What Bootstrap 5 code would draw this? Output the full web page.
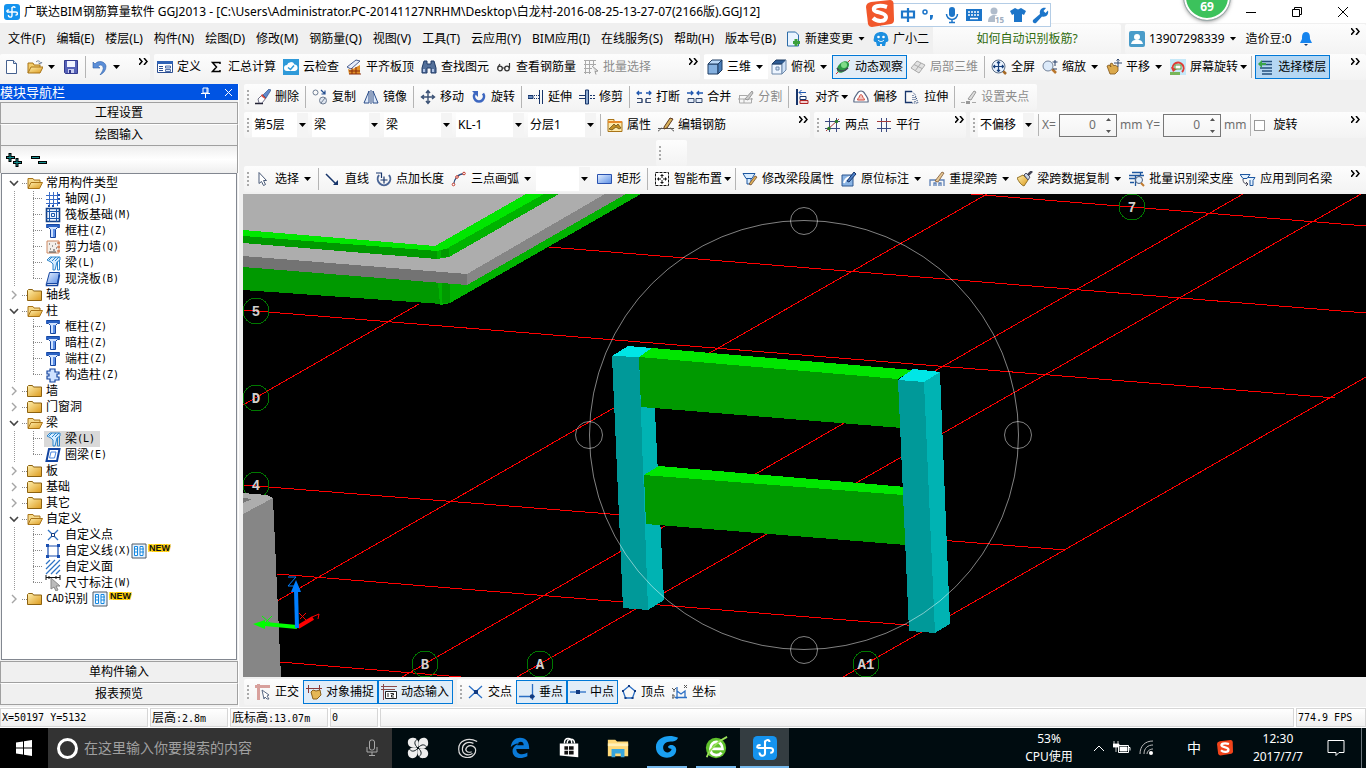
<!DOCTYPE html>
<html lang="zh-CN">
<head>
<meta charset="utf-8">
<meta name="viewport" content="width=device-width, initial-scale=1">
<title>广联达BIM钢筋算量软件 GGJ2013</title>
<link href="https://cdn.jsdelivr.net/npm/bootstrap@5.3.0/dist/css/bootstrap.min.css" rel="stylesheet">
<style>
:root{--ui:"Noto Sans","Noto Sans CJK SC",sans-serif;--mono:"DejaVu Sans Mono","Noto Sans CJK SC",monospace}
body{font-family:var(--ui);font-size:12px;line-height:16px;color:#000;background:#f0f0f0;min-height:100vh;overflow:hidden}
.app{height:100vh}
svg{flex:none}
.ic{width:16px;height:16px}
.titlebar{height:23px;background:#fff}
.titlebar .logo{width:16px;height:16px}
.win-btn{width:46px;height:23px;border:0;background:none;padding:0}
.ime{top:3px;left:880px;width:171px;height:24px;background:#fff;border:1px solid #b4cde6;padding-left:18px;z-index:3}
.ime svg{width:18px;height:18px}
.ime-logo{top:0;left:866px;width:28px;height:28px;z-index:4}
.bubble{top:-26px;left:1184px;width:46px;height:46px;border-radius:50%;background:#3cc25c;border:2px solid #fff;outline:1px solid #9aa;box-shadow:0 1px 4px #777;color:#fff;font-weight:700;font-size:12px;line-height:12px;z-index:3;padding-bottom:5px}
.menurow{height:31px}
.menurow .menu-link{padding:0 6px 0 5px;color:#000;text-decoration:none;white-space:nowrap}
.tip-link{color:#2f6b0c;text-decoration:none}
.band{height:26px;background:linear-gradient(#fdfdfd,#f3f3f3);display:flex;align-items:center;flex:none;border-radius:2px}
.menurow .band{height:30px}
.band.fill{flex:1 1 0;min-width:0}
.b-user{width:241px}.b-file{width:150px}.b-calc{width:546px}.b-pick{width:566px}.b-axis{width:152px}.b-stub{width:31px;margin-left:412px}
.tool{display:inline-flex;align-items:center;gap:4px;height:24px;padding:0 4px 0 3px;border:0;border-radius:0;background:none;font-size:12px;line-height:16px;color:#000;white-space:nowrap;flex:none}
.tool:disabled{color:#8c8c8c;opacity:1;border:0}
.tool.on{background:#e1edf8;outline:1px solid #0078d7;outline-offset:-1px}
.tool.on.deep{background:#b5d7f3}
.tool.dd::after,.tool.ddt::after{content:"";width:7px;height:4px;background:#000;clip-path:polygon(0 0,100% 0,50% 100%);margin:0 1px}
.tool.ddt::after{margin:0 -2px}
.tool.white{background:#fff}
.vsep{width:1px;height:22px;background:#b4b4b4;margin:0 3px 0 2px;flex:none}
.grip{width:2px;height:14px;margin:0 3px 0 3px;flex:none;background:repeating-linear-gradient(#aaa 0 2px,transparent 2px 4px)}
.more{margin-left:auto;align-self:flex-start;border:0;background:none;padding:4px 2px 0;line-height:0;flex:none}
.more svg{width:9px;height:7px}
.combo{display:flex;height:24px;background:#fff;flex:none}
.combo select{flex:1 1 0;min-width:0;border:0;appearance:none;background:none;font:12px/16px var(--ui);color:#000;padding:0 2px}
.combo::after{content:"";width:11px;background:url("data:image/svg+xml,%3Csvg xmlns='http://www.w3.org/2000/svg' width='11' height='24'%3E%3Cpath d='M2 10h7l-3.500 4z'/%3E%3C/svg%3E") #f4f4f4}
.w-floor{width:56px}.w-kind{width:68px}.w-blank{width:54px}
.spin{display:flex;align-items:center;width:58px;height:23px;border:1px solid #777;margin:0 3px;flex:none}
.spin input{flex:1 1 0;min-width:0;border:0;background:none;text-align:right;color:#6e6e6e;padding:0 8px 0 0;font-size:12px}
.spin svg{width:9px;height:17px;margin-right:3px}
.dim{color:#6e6e6e}
.chk{appearance:none;width:11px;height:11px;border:1px solid #999;background:#fff;margin:0 8px 0 0}
.side{width:239px;border-right:1px solid #fff;flex:none}
.side-head{height:16px;background:#0054e3;color:#fff;font-size:13px;line-height:16px;flex:none;margin-bottom:2px}
.side-head svg{width:11px;height:11px}
.acc{height:22px;border:1px solid #a0a0a0;background:#f0f0f0;font-size:12px;padding:0;border-radius:0;flex:none;width:238px;color:#000}
.acc + .acc{border-top-color:#fff}
.acc.last{margin-bottom:2px}
.side-tools{height:27px;background:linear-gradient(#eee,#fff 50%,#eee);border:1px solid #a0a0a0;border-width:0 1px;width:238px;flex:none}
.treebox{border:1px solid #828790;background:#fff;width:236px;margin-left:1px;margin-bottom:1px;padding-top:1px;min-height:0;overflow:hidden}
.treebox ul{list-style:none;margin:0;padding:0}
.trow{display:flex;align-items:center;height:16px;padding-left:7px;white-space:nowrap}
.trow .chev{width:10px;height:10px}
.trow .stub{width:5px;height:1px;margin-left:3px;background:repeating-linear-gradient(90deg,#888 0 1px,transparent 1px 2px)}
.trow .ic{margin-right:3px}
.kids{background:repeating-linear-gradient(#999 0 1px,transparent 1px 2px) 12px 0/1px 100% no-repeat}
.leaf{display:flex;height:16px;padding-left:31px;white-space:nowrap}
.leaf::before{content:"";width:10px;margin-right:1px;background:repeating-linear-gradient(#888 0 1px,transparent 1px 2px) 0 0/1px 100% no-repeat,repeating-linear-gradient(90deg,#888 0 1px,transparent 1px 2px) 0 7px/10px 1px no-repeat}
.leaf:last-child::before{background-size:1px 8px,10px 1px}
.leaf span.item{display:flex;padding:0 5px 0 1px}
.leaf .ic{margin-right:4px}
.leaf .sel{background:#d9d9d9}
.lat{font:10px/16px var(--mono)}
.newtag{font:bold 9px/9px "Liberation Sans",sans-serif;color:#111;text-shadow:0 0 1px #ffcf00,1px 1px 0 #ffcf00,-1px -1px 0 #ffcf00,1px -1px 0 #ffcf00,-1px 1px 0 #ffcf00;margin:1px 0 0 2px}
.canvas{background:#000;min-height:0;margin-left:4px}
.canvas svg{width:100%;height:100%;display:block}
.work{min-width:0}
.work > .rowbar{padding-left:5px}
.gap-row{margin-bottom:2px}
.snapbar{height:30px}
.status{height:21px;background:#fff;font:10px/18px var(--mono);flex:none;gap:2px;padding-top:1px}
.status > div{height:19px;border:1px solid #d6d6d6;background:linear-gradient(#fff,#f0f0f0);padding-left:1px;white-space:nowrap}
.status .zh{font-size:12px}
.s-xy{width:148px}.s-h{width:78px}.s-b{width:98px}.s-n{width:48px}.s-fps{width:70px}
.taskbar{height:40px;background:#000c10;color:#fff;flex:none}
.start{width:48px;height:40px;background:#000;border:0;padding:0}
.search{width:344px;height:40px;background:#333;padding:0 14px 0 8px;margin-right:1px}
.search input{border:0;background:none;color:#aaa;font-size:14px;flex:1;min-width:0;padding:0 0 0 5px}
.search input::placeholder{color:#a0a0a0;opacity:1}
.tk{width:49px;height:40px;border:0;background:none;padding:0}
.tk.run{background:linear-gradient(#76b9ed,#76b9ed) 50% 100%/40px 2px no-repeat}
.tk.cur{background:linear-gradient(#76b9ed,#76b9ed) 50% 100%/49px 2px no-repeat #343d41}
.tk svg{width:24px;height:24px}
.tray{line-height:18px}
.tray-ime{font-size:14px}
</style>
</head>
<body>
<svg width="0" height="0" class="position-absolute" aria-hidden="true">
<defs>
<linearGradient id="gold" x2="1" y2="1"><stop offset="0" stop-color="#fff0b0"/><stop offset="1" stop-color="#dc9a1c"/></linearGradient>
<linearGradient id="blu" x2="1" y2="1"><stop offset="0" stop-color="#e6f1ff"/><stop offset="1" stop-color="#5c8fe6"/></linearGradient>
<symbol id="i-app" viewBox="0 0 16 16"><rect width="16" height="16" rx="3" fill="#1593ee"/><path d="M8 3v8.500c0 2.500-4 2-3.500-.5M3 8h8.500c2.500 0 2.500 3.500 0 3M8 4c1-2 3-1.500 3 0M3 8c-.5-1.500 1-2.500 2-1.500" fill="none" stroke="#fff" stroke-width="1.400"/></symbol>
<symbol id="i-new" viewBox="0 0 16 16"><path d="M2.500 1.500h7l3 3v10h-10z" fill="#fff" stroke="#46618f"/><path d="M9.500 1.500v3h3" fill="#dbe6f6" stroke="#46618f"/></symbol>
<symbol id="i-open" viewBox="0 0 16 16"><path d="M1 14V4h5l1 2h6v2" fill="#f3cd6b" stroke="#a97418"/><path d="M1 14 4 8h12l-3 6z" fill="url(#gold)" stroke="#a97418"/><path d="M9 3c2-2 4-1 4.500 1M15 3l-1.500 2-2-1" fill="none" stroke="#6c7e97"/></symbol>
<symbol id="i-save" viewBox="0 0 16 16"><path d="M1.500 1.500h13v13h-12l-1-1z" fill="#5662b8" stroke="#333a8e"/><path d="M4 2h8v6H4z" fill="#f2f4ff"/><path d="M5 10h6v4H5z" fill="#c8cdf0"/><path d="M6 11h2v3H6z" fill="#333a8e"/></symbol>
<symbol id="i-undo" viewBox="0 0 16 16"><path d="M1 3l2 2c3-4 10-3 11 2 0 4-2 7-6 9 2-3 4-6 3-8-1-3-4-2-5-.5L8 9H1z" fill="#5b8ed8" stroke="#2b5ea8" stroke-width=".6"/></symbol>
<symbol id="i-more" viewBox="0 0 9 7"><path d="M0 0l3 3.500L0 7M5 0l3 3.500L5 7" fill="none" stroke="#000" stroke-width="1.500"/></symbol>
<symbol id="i-def" viewBox="0 0 16 16"><path d="M.5 2.500h15v11H.5z" fill="#fff" stroke="#2b4f93"/><path d="M0 2h16v3H0z" fill="#2f62b5"/><path d="M2 7.500h4M2 9.500h4M2 11.500h4" stroke="#2b4f93"/><path d="M8.500 7h5v2h-5zM8.500 10.500h5v2h-5z" fill="#dceaff" stroke="#2b4f93" stroke-width=".8"/></symbol>
<symbol id="i-sum" viewBox="0 0 16 16"><path d="M12 5V3.500H4.500L8.500 8l-4 4.500H12V11" fill="none" stroke="#000" stroke-width="1.500"/></symbol>
<symbol id="i-cloud" viewBox="0 0 16 16"><path d="M0 0h16v16H0z" fill="#2f9ad9"/><path d="M4 12a3 3 0 010-6 4 4 0 017.500-.5A3.300 3.300 0 0112 12z" fill="#fff"/><path d="M5 8.500l2.500 2L11 6.500" fill="none" stroke="#2f9ad9" stroke-width="1.500"/></symbol>
<symbol id="i-slab" viewBox="0 0 16 16"><path d="M1 8 10 1l4 1-9 8z" fill="#e8eefc" stroke="#4a5f8f"/><path d="M2 10l3 1 9-5v9H3z" fill="#e0902a"/><path d="M6 9v6M10 8v7M3 12h11M3 15h12" stroke="#8a2d0b"/></symbol>
<symbol id="i-find" viewBox="0 0 16 16"><path d="M3 2h3v3h4V2h3l2 7v5h-5V9H6v5H1V9z" fill="#536f99" stroke="#203b66"/><path d="M3 10v3M12 10v3" stroke="#cfe0ff" stroke-width="1.500"/></symbol>
<symbol id="i-glass" viewBox="0 0 16 16"><circle cx="4" cy="9.500" r="2.300" fill="none" stroke="#333" stroke-width="1.300"/><circle cx="11" cy="9.500" r="2.300" fill="none" stroke="#333" stroke-width="1.300"/><path d="M6 9h3M2 8l2-3M13.500 9V4" stroke="#333" stroke-width="1.200"/></symbol>
<symbol id="i-batch" viewBox="0 0 16 16"><path d="M1 1.500h12M1 5.500h12M1 9.500h8M1 13.500h7M2.500 1v14M6.500 1v14M10.500 1v6" stroke="#aaa"/><path d="M9 7l6 5-3 .5 1 3" fill="#ddd" stroke="#999"/></symbol>
<symbol id="i-cube" viewBox="0 0 16 16"><path d="M1 5h10v10H1z" fill="#85b1e0" stroke="#1f3c63"/><path d="M1 5l4-4h10l-4 4z" fill="#b9d8f7" stroke="#1f3c63"/><path d="M11 5l4-4v10l-4 4z" fill="#497db8" stroke="#1f3c63"/></symbol>
<symbol id="i-cubet" viewBox="0 0 16 16"><path d="M1 5h10v10H1z" fill="#edf5ff" stroke="#6f89aa"/><path d="M1 5l4-4h10l-4 4z" fill="#2e5c94" stroke="#1f3c63"/><path d="M11 5l4-4v10l-4 4zM5 8h3v3H5z" fill="#cfe2f8" stroke="#6f89aa"/></symbol>
<symbol id="i-orbit" viewBox="0 0 16 16"><path d="M1 15 15 1" stroke="#c33"/><ellipse cx="8" cy="8" rx="7" ry="4.500" transform="rotate(-42 8 8)" fill="#2c9a45"/><circle cx="9" cy="6" r="3" fill="#7fdc88"/><path d="M2 9c2 4 7 4 11 0" fill="none" stroke="#445" stroke-width="1.500"/></symbol>
<symbol id="i-local" viewBox="0 0 16 16"><path d="M1 9l6-7 8 4-6 8zM4 5.500l8 4M5 12l6-8" fill="#e2e2e2" stroke="#aaa"/></symbol>
<symbol id="i-full" viewBox="0 0 16 16"><path d="M11 11l4 4" stroke="#a66a26" stroke-width="2.500"/><circle cx="7.500" cy="7.500" r="6.500" fill="#e8f1fc" stroke="#5b6f88"/><path d="M7.500 2.500v10M2.500 7.500h10M6 4l1.500-1.500L9 4M6 11l1.500 1.500L9 11M4 6 2.500 7.500 4 9M11 6l1.500 1.500L11 9" fill="none" stroke="#17407c" stroke-width="1.200"/></symbol>
<symbol id="i-zoom" viewBox="0 0 16 16"><path d="M10 10l4 4" stroke="#b9762c" stroke-width="2.500"/><circle cx="6" cy="7" r="5" fill="#dceafa" stroke="#72829a"/><path d="M13 1v6M10.500 3h5M11 10h4" stroke="#253f6b"/></symbol>
<symbol id="i-pan" viewBox="0 0 16 16"><path d="M1 7l2-1 2 2-1-3 2-1 2 3 1-1 3 2v4l-3 3H4z" fill="#dba94b" stroke="#7f541b" stroke-width=".8"/><path d="M12 0v8M8 4h8M10.500 1.500 12 0l1.500 1.500" fill="none" stroke="#334a70"/></symbol>
<symbol id="i-spin" viewBox="0 0 16 16"><path d="M0 0h16v16H0z" fill="#c5e8f8"/><path d="M3 11a5.500 5.500 0 119 2" fill="none" stroke="#e23b35" stroke-width="2"/><path d="M1 8l2 5 4-3z" fill="#e23b35"/><rect x="5" y="6" width="6" height="4" fill="#fff" stroke="#5f9c3e"/><path d="M0 13h10v3H0z" fill="#79b65a"/></symbol>
<symbol id="i-floor" viewBox="0 0 16 16"><path d="M4 2.500h10M4 5.500h10M2 9h12M4 12h10M4 15h10" stroke="#24507e" stroke-width="1.500"/><path d="M0 5l4-4v3h4v2H4v3z" fill="#3aa54a"/></symbol>
<symbol id="i-del" viewBox="0 0 16 16"><path d="M0 14.500h8" stroke="#223" stroke-width="1.500"/><path d="M3 10l4-4 4 3-4 5H4z" fill="#fff" stroke="#335" stroke-width=".7"/><path d="M6 7l4 3 1-2-4-3z" fill="#d8483c"/><path d="M8 6l6-6 2 1-5 8z" fill="#6289cb" stroke="#25467c" stroke-width=".6"/></symbol>
<symbol id="i-copy" viewBox="0 0 16 16"><circle cx="3.500" cy="3.500" r="2.500" fill="none" stroke="#6d7c92"/><circle cx="11" cy="11.500" r="3.500" fill="#dfe6f0" stroke="#6d7c92"/><path d="M9 14l4-5" stroke="#6d7c92"/><path d="M9 1l4 4M13 1.500V5H9.500" fill="none" stroke="#254f90" stroke-width="1.200"/></symbol>
<symbol id="i-mirror" viewBox="0 0 16 16"><path d="M6 2v12H1zM10 2v12h5z" fill="#dfeafa" stroke="#2a4c88"/><path d="M8 1v14" stroke="#2a4c88"/></symbol>
<symbol id="i-move" viewBox="0 0 16 16"><path d="M8 2v12M2 8h12M6 4l2-2.500L10 4M6 12l2 2.500L10 12M4 6 1.500 8 4 10M12 6l2.500 2L12 10" fill="none" stroke="#3b5275" stroke-width="1.400"/></symbol>
<symbol id="i-rot" viewBox="0 0 16 16"><path d="M4 4.500a5 5 0 108 0" fill="none" stroke="#3d67c0" stroke-width="2.600"/><path d="M1 2h6v6z" fill="#3d67c0"/></symbol>
<symbol id="i-ext" viewBox="0 0 16 16"><path d="M0 6.500h5v3H0z" fill="#6c8fc0" stroke="#17356b"/><path d="M6 6.500h5M6 9.500h5" stroke="#17356b" stroke-dasharray="1 1"/><path d="M11.500 1v14M14.500 1v14" stroke="#17356b"/></symbol>
<symbol id="i-trim" viewBox="0 0 16 16"><path d="M0 6.500h6M0 9.500h6" stroke="#17356b"/><path d="M6.500 1v14h3V1z" fill="#8ca9cf" stroke="#17356b"/><path d="M11 6.500h5M11 9.500h5" stroke="#17356b" stroke-dasharray="2 1"/></symbol>
<symbol id="i-break" viewBox="0 0 16 16"><path d="M6 4H1M10 4h5M3 2 1 4l2 2M13 2l2 2-2 2" fill="none" stroke="#2058b0" stroke-width="1.300"/><path d="M1 9.500h5v4H1M15 9.500h-5v4h5M6 10v4M10 10v4" fill="none" stroke="#33486e"/></symbol>
<symbol id="i-join" viewBox="0 0 16 16"><path d="M0 4h6M16 4h-6M4 2l2 2-2 2M12 2l-2 2 2 2" fill="none" stroke="#2058b0" stroke-width="1.300"/><path d="M1 9.500h6v4H1zM9 9.500h6v4H9z" fill="#e6eefa" stroke="#33486e"/></symbol>
<symbol id="i-split" viewBox="0 0 16 16"><path d="M1.500 6.500h8M1.500 6v8h12v-5M0 10h15M6 10v4" fill="none" stroke="#aaa"/><path d="M7 10l7-8 1 2-5 7z" fill="#ccc" stroke="#999"/></symbol>
<symbol id="i-align" viewBox="0 0 16 16"><path d="M2 0v16" stroke="#17356b" stroke-width="2"/><path d="M4 3.500h7M6.500 1 4 3.500 6.500 6" fill="none" stroke="#2058b0"/><path d="M5 7.500h6v3H5z" fill="#fff" stroke="#17356b"/><path d="M5 11.500h8v3H5z" fill="#f3cfcf" stroke="#b02222"/></symbol>
<symbol id="i-offset" viewBox="0 0 16 16"><path d="M1 13C0 9 3 7 4 5c2-4 6-4 8 0 1 2 4 4 3 8z" fill="#fff" stroke="#5b6a86" stroke-width="1.200"/><path d="M4.500 11c0-2 2-2 2-4 1-2 2-2 3 0 0 2 2 2 2 4z" fill="#f4c4bd" stroke="#d24b3d"/></symbol>
<symbol id="i-stretch" viewBox="0 0 16 16"><path d="M8 2.500H1.500v11H8" fill="none" stroke="#17356b" stroke-width="1.300"/><path d="M8 2.500l3 3 3 8.500H8M9 6v6M11 8v5" fill="none" stroke="#17356b" stroke-dasharray="1 1"/></symbol>
<symbol id="i-pen" viewBox="0 0 16 16"><path d="M0 13.500h4M11 13.500h4" stroke="#aaa"/><path d="M5 12h4v3H5z" fill="#999"/><path d="M7 10l6-8 2 1-5 8z" fill="#ddd" stroke="#999"/></symbol>
<symbol id="i-prop" viewBox="0 0 16 16"><path d="M1 2.500h6v2h8v10H1z" fill="#ffe9a8" stroke="#a97418"/><path d="M1 5h14" stroke="#e78a2a" stroke-width="2"/><path d="M2 12l5-5 2 2 2-2 3 4-2 1-3-2-4 3z" fill="#c08d22" stroke="#5b430f" stroke-width=".7"/></symbol>
<symbol id="i-edit" viewBox="0 0 16 16"><path d="M0 11.500h16M4 11c-2 0-2 3-4 3M12 11c2 0 2 3 4 3" fill="none" stroke="#555"/><path d="M6 10l6-9 3 1-6 9-3 1z" fill="#d9b25c" stroke="#5d3a21"/></symbol>
<symbol id="i-two" viewBox="0 0 16 16"><path d="M4.500 1v14M11.500 1v14M0 4.500h15M0 11.500h15" stroke="#3b4a80"/><path d="M1 14 14 2" stroke="#a33"/><circle cx="4" cy="11.500" r="1.800" fill="#2a7d2a"/><circle cx="11.500" cy="4.500" r="1.800" fill="#2a7d2a"/></symbol>
<symbol id="i-par" viewBox="0 0 16 16"><path d="M5.500 1v14M10.500 1v14M1 11.500h14" stroke="#3b4a80"/><path d="M1 4.500h14" stroke="#a33a3a"/></symbol>
<symbol id="i-cur" viewBox="0 0 16 16"><path d="M4 1.500v11l2.500-2 2 4 2-1-2-4h3z" fill="#fff" stroke="#4a5b78"/></symbol>
<symbol id="i-line" viewBox="0 0 16 16"><path d="M1 3l10 10" stroke="#17356b" stroke-width="1.500"/><path d="M13 9v5H8z" fill="#17356b"/></symbol>
<symbol id="i-ptlen" viewBox="0 0 16 16"><path d="M3 4a6.300 6.300 0 1010 0" fill="none" stroke="#4a6596" stroke-width="2"/><path d="M0 2h5.500v5M8 5.500v7M4.500 9h7" fill="none" stroke="#17356b" stroke-width="1.200"/></symbol>
<symbol id="i-arc" viewBox="0 0 16 16"><path d="M2.500 14C3 8 7 3 13 2.500" fill="none" stroke="#2c4b7d" stroke-width="1.300"/><g fill="#fff" stroke="#c43a2c"><circle cx="2.500" cy="13.500" r="1.300"/><circle cx="6" cy="6" r="1.300"/><circle cx="13" cy="2.500" r="1.300"/></g></symbol>
<symbol id="i-rect" viewBox="0 0 16 16"><path d="M.5 3.500h14v9H.5z" fill="url(#blu)" stroke="#2a52b0"/></symbol>
<symbol id="i-smart" viewBox="0 0 16 16"><path d="M1.500 1.500h13v13h-13z" fill="#fff" stroke="#111" stroke-dasharray="3 1"/><path d="M8 3v4M8 9v4M3 8h4M9 8h4M6.500 4.500h3M6.500 11.500h3M4.500 6.500v3M11.500 6.500v3" stroke="#111"/></symbol>
<symbol id="i-seg" viewBox="0 0 16 16"><path d="M1 2.500h12l-3 5H4zM5 7v6h4V7" fill="#d8ecff" stroke="#1d57a0"/><path d="M7 13l6-8 2 1-6 8z" fill="#e3b35a" stroke="#5d3a21" stroke-width=".7"/></symbol>
<symbol id="i-orig" viewBox="0 0 16 16"><path d="M1 4h11v11H1z" fill="#8ab4e4" stroke="#2c5690"/><path d="M3 12c1-4 3-5 6-6" stroke="#fff" stroke-width="2" fill="none"/><path d="M6 10l7-9 2 2-7 8z" fill="#4c7fc4" stroke="#17356b"/></symbol>
<symbol id="i-span" viewBox="0 0 16 16"><path d="M1 15V9h14v6M5 15v-3h2v3M10 15v-3h2v3" fill="none" stroke="#5d81b6" stroke-width="1.300"/><path d="M6 10l7-9 2 1-6 9z" fill="#e6c895" stroke="#7e5732" stroke-width=".8"/></symbol>
<symbol id="i-brush" viewBox="0 0 16 16"><path d="M0 7l6-3 5 5-4 6c-3-1-5-4-7-8z" fill="url(#gold)" stroke="#94732a"/><path d="M7 4l2-2 4 4-2 3z" fill="#c6d4e8" stroke="#556"/><path d="M11 4l4-4" stroke="#445" stroke-width="2.500"/></symbol>
<symbol id="i-recog" viewBox="0 0 16 16"><path d="M3 1.500h11M0 4.500h15M0 7.500h6M1 11.500h4M6.500 4v11M11.500 1v4" stroke="#1d57a0" stroke-width="1.300"/><circle cx="10" cy="9" r="3.500" fill="#e2f0fd" stroke="#4a5b78"/><path d="M12 12l3 3" stroke="#c17a2c" stroke-width="2"/></symbol>
<symbol id="i-same" viewBox="0 0 16 16"><path d="M0 3.500h10l-3 4H3zM8 6.500h7l-2 3v5h-3V9" fill="#e2f0fd" stroke="#1d57a0"/><path d="M3 8c0 4 2 5 5 5M6 11l2 2-2 2" fill="none" stroke="#445"/></symbol>
<symbol id="i-ortho" viewBox="0 0 16 16"><path d="M0 2.500h15M3.500 0v16" stroke="#d8a09c" stroke-width="3"/><path d="M7 6l7 5-2 1 2 3-2 0-2-2-1 2z" fill="#fff" stroke="#5b6b85"/></symbol>
<symbol id="i-snap" viewBox="0 0 16 16"><path d="M0 4.500h16M2.500 1v8M13.500 1v8" stroke="#8b3a3a"/><path d="M5 8l2-2 3 1 4-1 1 5-4 4H7z" fill="#e5b755" stroke="#8b611c"/></symbol>
<symbol id="i-dyn" viewBox="0 0 16 16"><path d="M0 2.500h16M2.500 0v16M0 5.500h14" stroke="#8b4a4a"/><path d="M4.500 7.500h11v7h-11z" fill="#fff" stroke="#222"/><path d="M7 9v4M9.500 9.500h3v1.500h-2v2h2.500" fill="none" stroke="#222"/></symbol>
<symbol id="i-x" viewBox="0 0 16 16"><path d="M1 2l13 12M14 2 1 14" stroke="#2b6fc4" stroke-width="1.300"/><path d="M6 6h4v4H6z" fill="#123a80"/></symbol>
<symbol id="i-perp" viewBox="0 0 16 16"><path d="M0 12.500h16M13.500 0v16" stroke="#2b6fc4" stroke-width="1.300"/><circle cx="13" cy="12.500" r="2.200" fill="#123a80"/></symbol>
<symbol id="i-mid" viewBox="0 0 16 16"><path d="M0 8h16" stroke="#2b6fc4" stroke-width="1.300"/><path d="M6 6h4v4H6z" fill="#123a80"/></symbol>
<symbol id="i-vert" viewBox="0 0 16 16"><path d="M8 2l6 5-2.500 7h-7L2 7z" fill="none" stroke="#2b6fc4" stroke-width="1.300"/><path d="M7 1h2v2H7zM1 6h2v2H1zM13 6h2v2h-2zM3.500 13h2v2h-2zM10.500 13h2v2h-2z" fill="#123a80"/></symbol>
<symbol id="i-coord" viewBox="0 0 16 16"><path d="M5 3v12M3 13.500h12M5 7l4 3 4-3v6" fill="none" stroke="#2b6fc4" stroke-width="1.300"/><path d="M0 4l2 2 2-2M2 6v2M12 1l3 3M15 1l-3 3M0 11h2v3H0z" fill="none" stroke="#555"/></symbol>
<symbol id="t-down" viewBox="0 0 10 10"><path d="M1 3l4 4 4-4" fill="none" stroke="#444" stroke-width="1.600"/></symbol>
<symbol id="t-right" viewBox="0 0 10 10"><path d="M3 1l4 4-4 4" fill="none" stroke="#a5a5a5" stroke-width="1.400"/></symbol>
<symbol id="f-open" viewBox="0 0 16 16"><path d="M1 13V3.500h5l1 1.500h6v2" fill="#f5d98a" stroke="#a97418"/><path d="M1 13.500 4 7.500h11.500l-3 6z" fill="url(#gold)" stroke="#a97418"/></symbol>
<symbol id="f-shut" viewBox="0 0 16 16"><path d="M.5 13.500V3.500l1-1h4l1 1.500h8v9.500z" fill="url(#gold)" stroke="#8d6210"/></symbol>
<symbol id="c-grid" viewBox="0 0 16 16"><path d="M4.500 1v14M8.500 1v14M12.500 1v14M1 4.500h11M1 8.500h11M1 12.500h11" stroke="#3a6cc8"/><path d="M13 3h2v2h-2zM13 7h2v2h-2zM13 11h2v2h-2zM3 14h2v2H3zM7 14h2v2H7z" fill="#1a4fb0"/></symbol>
<symbol id="c-raft" viewBox="0 0 16 16"><path d="M1.500 1.500h13v13h-13z" fill="#eaf3ff" stroke="#123f86" stroke-width="1.600"/><path d="M4.500 1v14M11.500 1v14M1 4.500h14M1 11.500h14M6.500 6.500h3v3h-3z" fill="none" stroke="#1b57aa"/></symbol>
<symbol id="c-col" viewBox="0 0 16 16"><path d="M1.500 1.500h13v3h-2l-2 2v8h-5v-8l-2-2h-2z" fill="#cfe2ff" stroke="#1445a0"/><path d="M1 2h14v2H1z" fill="#2a62c4"/><path d="M9 6v8" stroke="#5c8fe6" stroke-width="2"/></symbol>
<symbol id="c-wall" viewBox="0 0 16 16"><path d="M2 2h12v12H2z" fill="#f3efea" stroke="#ce8a63"/><path d="M4 5h1M7 7h1M10 5h1M5 10h1M8 11h2M11 9h1M4 13h7" stroke="#444"/><path d="M12 4h3M12 8h3M12 12h3" stroke="#c2501b"/></symbol>
<symbol id="c-beam" viewBox="0 0 16 16"><path d="M2 5l3-3h10v3l-3 2-2 8H8V9L6 7z" fill="#d6ecff" stroke="#2c86cc"/><path d="M4 5l3-3M7 6l4-4M10 6l4-4M12.500 7v8h2V5" fill="none" stroke="#2c86cc"/></symbol>
<symbol id="c-slab" viewBox="0 0 16 16"><path d="M4.500 1.500h10l-2 11H1.500z" fill="url(#blu)" stroke="#1445a0"/><path d="M1.500 12.500v2h11l2-11" fill="none" stroke="#1445a0" stroke-width="1.500"/></symbol>
<symbol id="c-ring" viewBox="0 0 16 16"><path d="M4 2h10.500l-2.500 12H1.500z" fill="none" stroke="#1445a0" stroke-width="2"/><path d="M6 5h5l-1.500 6H4.500z" fill="#fff" stroke="#4a86e0"/></symbol>
<symbol id="c-struct" viewBox="0 0 16 16"><path d="M5 2h5v3h4v2h-2v3h2v3h-4v2H5v-3H2V9h2V7H2V4h3z" fill="#cfe2ff" stroke="#1445a0" stroke-width="1.200"/></symbol>
<symbol id="c-pt" viewBox="0 0 16 16"><path d="M3 3l10 10M13 3 3 13" stroke="#2d72c4" stroke-width="1.300"/><path d="M6.500 6.500h3v3h-3z" fill="#fff" stroke="#123a80"/></symbol>
<symbol id="c-ln" viewBox="0 0 16 16"><path d="M3 3h10v10H3z" fill="#fff" stroke="#1a4fb0" stroke-width="1.200"/><path d="M1 1h3v3H1zM12 1h3v3h-3zM1 12h3v3H1zM12 12h3v3h-3z" fill="#1a4fb0"/></symbol>
<symbol id="c-face" viewBox="0 0 16 16"><path d="M1 5l4-4M1 10l9-9M1 15 15 1M6 15l9-9M11 15l4-4" stroke="#2d72c4" stroke-width="1.200"/></symbol>
<symbol id="c-dim" viewBox="0 0 16 16"><path d="M1 0v5M15 0v5M1 2.500h14M4 1v3M11 1v3" stroke="#111"/><path d="M6 3v11l3-2 2 4 2-1-2-4h4z" fill="#bbb" stroke="#888"/></symbol>
<symbol id="c-vid" viewBox="0 0 16 16"><path d="M1 1h14v14H1z" fill="#e5f2ff" stroke="#4e5a66"/><path d="M3.500 3.500h3v9h-3zM9 3.500h3v9H9z" fill="#fff" stroke="#1688e0"/><path d="M3 6h4M3 9h4M9 6h4M9 9h4" stroke="#1688e0"/></symbol>
</defs>
</svg>
<div class="app d-flex flex-column position-relative">
<header class="titlebar d-flex align-items-center flex-shrink-0">
<svg class="logo ms-1 me-1"><use href="#i-app"/></svg><span class="text-nowrap">广联达BIM钢筋算量软件 GGJ2013 - [C:\Users\Administrator.PC-20141127NRHM\Desktop\白龙村-2016-08-25-13-27-07(2166版).GGJ12]</span>
<div class="ms-auto d-flex">
<button class="win-btn" aria-label="最小化"><svg width="10" height="10"><path d="M0 5.500h10" stroke="#000"/></svg></button>
<button class="win-btn" aria-label="还原"><svg width="10" height="10"><path d="M.5 2.500h7v7h-7zM2.500 2V.5h7v7H8" fill="none" stroke="#000"/></svg></button>
<button class="win-btn" aria-label="关闭"><svg width="10" height="10"><path d="M0 0l10 10M10 0 0 10" stroke="#000"/></svg></button>
</div>
</header>
<svg class="ime-logo position-absolute" viewBox="0 0 28 28"><path d="M5 2 24 0q3 0 3.500 3L28 20q0 3-3 4L6 27q-3 0-4-3L0 7q0-4 5-5z" fill="#f1572b"/><path d="M21 7C12 4 7 7 8 10s12 2 12 7-9 5-13 1" fill="none" stroke="#fff" stroke-width="4"/></svg>
<div class="ime position-absolute d-flex align-items-center gap-1">
<svg viewBox="0 0 18 18"><path d="M9 2v14M3 5.500h12v6H3z" fill="none" stroke="#1c75c9" stroke-width="2.200"/></svg>
<svg viewBox="0 0 18 18"><circle cx="4" cy="6" r="2" fill="none" stroke="#1c75c9" stroke-width="1.500"/><path d="M9 9h3c0 3-1 5-3 5z" fill="#1c75c9"/></svg>
<svg viewBox="0 0 18 18"><rect x="6" y="1" width="6" height="10" rx="3" fill="#1c75c9"/><path d="M3.500 8a5.500 5.500 0 0011 0M9 13v4M6 16.500h6" fill="none" stroke="#1c75c9" stroke-width="1.500"/></svg>
<svg viewBox="0 0 18 18"><path d="M1 3h16v12H1z" fill="#1c75c9"/><path d="M3 6h12M3 9h12" stroke="#fff" stroke-width="1.500" stroke-dasharray="2 1"/><path d="M5 12.500h8" stroke="#fff" stroke-width="1.500"/></svg>
<svg viewBox="0 0 18 18"><circle cx="7" cy="5" r="3.500" fill="#b0bccb"/><path d="M1 16c0-5 3-7 6-7s4 1 5 3v4z" fill="#b0bccb"/><path d="M8 10h10v7H8z" fill="#fff"/><text x="8" y="17" font-size="8" font-weight="700" fill="#a0aebf">15</text></svg>
<svg viewBox="0 0 18 18"><path d="M6 2l3 1.500L12 2l5 3-2 4-2-1v8H5V8L3 9 1 5z" fill="#1c75c9"/></svg>
<svg viewBox="0 0 18 18"><path d="M2 14 9 8C8 4 11 1 15 2l-2.500 3 2 2L17 4.500c1 4-2 7-6 6L5 17c-2 1-4-1-3-3z" fill="#1c75c9"/></svg>
</div>
<div class="bubble position-absolute d-flex align-items-end justify-content-center">69</div>

<nav class="menurow d-flex align-items-center flex-shrink-0">
<div class="d-flex align-items-center ps-1">
<a class="menu-link ps-1" href="#">文件(F)</a><a class="menu-link" href="#">编辑(E)</a><a class="menu-link" href="#">楼层(L)</a><a class="menu-link" href="#">构件(N)</a><a class="menu-link" href="#">绘图(D)</a><a class="menu-link" href="#">修改(M)</a><a class="menu-link" href="#">钢筋量(Q)</a><a class="menu-link" href="#">视图(V)</a><a class="menu-link" href="#">工具(T)</a><a class="menu-link" href="#">云应用(Y)</a><a class="menu-link" href="#">BIM应用(I)</a><a class="menu-link" href="#">在线服务(S)</a><a class="menu-link" href="#">帮助(H)</a><a class="menu-link" href="#">版本号(B)</a>
<button class="tool dd"><svg class="ic" viewBox="0 0 16 16"><path d="M2.500 1h8l3 3v11h-11z" fill="#e9f4ff" stroke="#2c6ca8"/><path d="M11 8v7M8 11.500h7" stroke="#3ba03b" stroke-width="3"/></svg>新建变更</button>
<button class="tool"><svg class="ic" viewBox="0 0 16 16"><path d="M1 7c0-8 14-8 14 0 1 3 0 4-2 4l-1 4H9v-2H7v2H4l-1-4C1 11 0 10 1 7z" fill="#1c8fe0"/><circle cx="5.500" cy="6" r="1.300" fill="#fff"/><circle cx="10.500" cy="6" r="1.300" fill="#fff"/><path d="M5 9c2 2 4 2 6 0" fill="none" stroke="#fff"/></svg>广小二</button>
</div>
<div class="band fill justify-content-center me-1"><a href="#" class="tip-link">如何自动识别板筋?</a></div>
<div class="band b-user">
<button class="tool dd ps-1"><svg class="ic" viewBox="0 0 16 16"><rect width="16" height="16" rx="2" fill="#4a9cc9"/><circle cx="8" cy="6" r="3" fill="#fff"/><path d="M2 13c1-4 3-4 6-4s5 0 6 4z" fill="#fff"/></svg>13907298339</button>
<span class="text-nowrap ms-1">造价豆:0</span>
<svg class="ms-2" width="12" height="16" viewBox="0 0 12 16"><path d="M6 1c4 0 4 4 4 7l2 4H0l2-4c0-3 0-7 4-7z" fill="#1684ee"/><path d="M4 13h4l-2 2z" fill="#1c3e70"/></svg>
<button class="more me-1" aria-label="更多"><svg><use href="#i-more"/></svg></button>
</div>
</nav>

<div class="d-flex flex-shrink-0 mb-1">
<div class="band me-1 b-file">
<button class="tool ms-1 ps-0" aria-label="新建"><svg class="ic"><use href="#i-new"/></svg></button><button class="tool dd" aria-label="打开"><svg class="ic"><use href="#i-open"/></svg></button><button class="tool" aria-label="保存"><svg class="ic"><use href="#i-save"/></svg></button><span class="vsep"></span><button class="tool dd" aria-label="撤销"><svg class="ic"><use href="#i-undo"/></svg></button><button class="more" aria-label="更多"><svg><use href="#i-more"/></svg></button>
</div>
<div class="band me-1 b-calc">
<button class="tool"><svg class="ic"><use href="#i-def"/></svg>定义</button><button class="tool"><svg class="ic"><use href="#i-sum"/></svg>汇总计算</button><button class="tool"><svg class="ic"><use href="#i-cloud"/></svg>云检查</button><button class="tool"><svg class="ic"><use href="#i-slab"/></svg>平齐板顶</button><button class="tool"><svg class="ic"><use href="#i-find"/></svg>查找图元</button><button class="tool"><svg class="ic"><use href="#i-glass"/></svg>查看钢筋量</button><button class="tool" disabled><svg class="ic"><use href="#i-batch"/></svg>批量选择</button><button class="more" aria-label="更多"><svg><use href="#i-more"/></svg></button>
</div>
<div class="band fill">
<button class="tool dd white"><svg class="ic"><use href="#i-cube"/></svg>三维</button><button class="tool dd"><svg class="ic"><use href="#i-cubet"/></svg>俯视</button><button class="tool on"><svg class="ic"><use href="#i-orbit"/></svg>动态观察</button><button class="tool" disabled><svg class="ic"><use href="#i-local"/></svg>局部三维</button><span class="vsep"></span><button class="tool"><svg class="ic"><use href="#i-full"/></svg>全屏</button><button class="tool dd"><svg class="ic"><use href="#i-zoom"/></svg>缩放</button><button class="tool dd"><svg class="ic"><use href="#i-pan"/></svg>平移</button><button class="tool ddt"><svg class="ic"><use href="#i-spin"/></svg>屏幕旋转</button><span class="vsep"></span><button class="tool on deep"><svg class="ic"><use href="#i-floor"/></svg>选择楼层</button><button class="more me-1" aria-label="更多"><svg><use href="#i-more"/></svg></button>
</div>
</div>

<div class="d-flex flex-fill" style="min-height:0">
<aside class="side d-flex flex-column">
<div class="side-head d-flex align-items-center"><span>模块导航栏</span><svg class="ms-auto me-2" viewBox="0 0 11 11"><path d="M3 1h5v5H3zM7 1v5M1 6.500h9M5.500 7v4" fill="none" stroke="#fff"/></svg><svg class="mx-1" viewBox="0 0 11 11"><path d="M2 2l7 7M9 2 2 9" stroke="#fff"/></svg></div>
<button class="acc">工程设置</button><button class="acc">绘图输入</button>
<div class="side-tools d-flex align-items-center ps-1 gap-2"><svg width="18" height="16" viewBox="0 0 18 16"><path d="M5 1v9M1 5.500h9M12 6v9M8 10.500h9" stroke="#000" stroke-width="3"/><path d="M5 2v7M2 5.500h7M12 7v7M9 10.500h7" stroke="#159090"/></svg><svg width="18" height="16" viewBox="0 0 18 16"><path d="M0 5.500h9M7 10.500h9" stroke="#000" stroke-width="3"/><path d="M1 5.500h7M8 10.500h7" stroke="#159090"/></svg></div>
<div class="treebox flex-fill">
<ul>
<li><div class="trow"><svg class="chev"><use href="#t-down"/></svg><i class="stub"></i><svg class="ic"><use href="#f-open"/></svg>常用构件类型</div>
<ul class="kids"><li class="leaf"><span class="item"><svg class="ic"><use href="#c-grid"/></svg>轴网<span class="lat">(J)</span></span></li><li class="leaf"><span class="item"><svg class="ic"><use href="#c-raft"/></svg>筏板基础<span class="lat">(M)</span></span></li><li class="leaf"><span class="item"><svg class="ic"><use href="#c-col"/></svg>框柱<span class="lat">(Z)</span></span></li><li class="leaf"><span class="item"><svg class="ic"><use href="#c-wall"/></svg>剪力墙<span class="lat">(Q)</span></span></li><li class="leaf"><span class="item"><svg class="ic"><use href="#c-beam"/></svg>梁<span class="lat">(L)</span></span></li><li class="leaf"><span class="item"><svg class="ic"><use href="#c-slab"/></svg>现浇板<span class="lat">(B)</span></span></li></ul></li>
<li><div class="trow"><svg class="chev"><use href="#t-right"/></svg><i class="stub"></i><svg class="ic"><use href="#f-shut"/></svg>轴线</div></li>
<li><div class="trow"><svg class="chev"><use href="#t-down"/></svg><i class="stub"></i><svg class="ic"><use href="#f-open"/></svg>柱</div>
<ul class="kids"><li class="leaf"><span class="item"><svg class="ic"><use href="#c-col"/></svg>框柱<span class="lat">(Z)</span></span></li><li class="leaf"><span class="item"><svg class="ic"><use href="#c-col"/></svg>暗柱<span class="lat">(Z)</span></span></li><li class="leaf"><span class="item"><svg class="ic"><use href="#c-col"/></svg>端柱<span class="lat">(Z)</span></span></li><li class="leaf"><span class="item"><svg class="ic"><use href="#c-struct"/></svg>构造柱<span class="lat">(Z)</span></span></li></ul></li>
<li><div class="trow"><svg class="chev"><use href="#t-right"/></svg><i class="stub"></i><svg class="ic"><use href="#f-shut"/></svg>墙</div></li>
<li><div class="trow"><svg class="chev"><use href="#t-right"/></svg><i class="stub"></i><svg class="ic"><use href="#f-shut"/></svg>门窗洞</div></li>
<li><div class="trow"><svg class="chev"><use href="#t-down"/></svg><i class="stub"></i><svg class="ic"><use href="#f-open"/></svg>梁</div>
<ul class="kids"><li class="leaf"><span class="item sel"><svg class="ic"><use href="#c-beam"/></svg>梁<span class="lat">(L)</span></span></li><li class="leaf"><span class="item"><svg class="ic"><use href="#c-ring"/></svg>圈梁<span class="lat">(E)</span></span></li></ul></li>
<li><div class="trow"><svg class="chev"><use href="#t-right"/></svg><i class="stub"></i><svg class="ic"><use href="#f-shut"/></svg>板</div></li>
<li><div class="trow"><svg class="chev"><use href="#t-right"/></svg><i class="stub"></i><svg class="ic"><use href="#f-shut"/></svg>基础</div></li>
<li><div class="trow"><svg class="chev"><use href="#t-right"/></svg><i class="stub"></i><svg class="ic"><use href="#f-shut"/></svg>其它</div></li>
<li><div class="trow"><svg class="chev"><use href="#t-down"/></svg><i class="stub"></i><svg class="ic"><use href="#f-open"/></svg>自定义</div>
<ul class="kids"><li class="leaf"><span class="item"><svg class="ic"><use href="#c-pt"/></svg>自定义点</span></li><li class="leaf"><span class="item"><svg class="ic"><use href="#c-ln"/></svg>自定义线<span class="lat">(X)</span><svg class="ic m-0"><use href="#c-vid"/></svg><b class="newtag">NEW</b></span></li><li class="leaf"><span class="item"><svg class="ic"><use href="#c-face"/></svg>自定义面</span></li><li class="leaf"><span class="item"><svg class="ic"><use href="#c-dim"/></svg>尺寸标注<span class="lat">(W)</span></span></li></ul></li>
<li><div class="trow"><svg class="chev"><use href="#t-right"/></svg><i class="stub"></i><svg class="ic"><use href="#f-shut"/></svg><span class="lat">CAD</span>识别<svg class="ic ms-1 me-0"><use href="#c-vid"/></svg><b class="newtag align-self-start">NEW</b></div></li>
</ul>
</div>
<button class="acc">单构件输入</button><button class="acc last">报表预览</button>
</aside>

<main class="work flex-fill d-flex flex-column">
<div class="rowbar gap-row d-flex flex-shrink-0"><div class="band pe-1">
<span class="grip"></span><button class="tool"><svg class="ic"><use href="#i-del"/></svg>删除</button><span class="vsep"></span><button class="tool"><svg class="ic"><use href="#i-copy"/></svg>复制</button><button class="tool"><svg class="ic"><use href="#i-mirror"/></svg>镜像</button><span class="vsep"></span><button class="tool"><svg class="ic"><use href="#i-move"/></svg>移动</button><button class="tool"><svg class="ic"><use href="#i-rot"/></svg>旋转</button><span class="vsep"></span><button class="tool"><svg class="ic"><use href="#i-ext"/></svg>延伸</button><button class="tool"><svg class="ic"><use href="#i-trim"/></svg>修剪</button><span class="vsep"></span><button class="tool"><svg class="ic"><use href="#i-break"/></svg>打断</button><button class="tool"><svg class="ic"><use href="#i-join"/></svg>合并</button><button class="tool" disabled><svg class="ic"><use href="#i-split"/></svg>分割</button><span class="vsep"></span><button class="tool ddt"><svg class="ic"><use href="#i-align"/></svg>对齐</button><button class="tool"><svg class="ic"><use href="#i-offset"/></svg>偏移</button><button class="tool"><svg class="ic"><use href="#i-stretch"/></svg>拉伸</button><span class="vsep"></span><button class="tool" disabled><svg class="ic"><use href="#i-pen"/></svg>设置夹点</button>
</div></div>

<div class="rowbar gap-row d-flex flex-shrink-0">
<div class="band me-1 b-pick"><span class="grip"></span>
<div class="d-flex gap-1"><div class="combo w-floor"><select aria-label="楼层"><option>第5层</option></select></div><div class="combo w-kind"><select aria-label="构件大类"><option>梁</option></select></div><div class="combo w-kind"><select aria-label="构件类型"><option>梁</option></select></div><div class="combo w-kind"><select aria-label="构件名称"><option>KL-1</option></select></div><div class="combo w-kind"><select aria-label="分层"><option>分层1</option></select></div></div>
<span class="vsep ms-1"></span><button class="tool"><svg class="ic"><use href="#i-prop"/></svg>属性</button><button class="tool"><svg class="ic"><use href="#i-edit"/></svg>编辑钢筋</button><button class="more" aria-label="更多"><svg><use href="#i-more"/></svg></button></div>
<div class="band me-1 b-axis"><span class="grip"></span><button class="tool"><svg class="ic"><use href="#i-two"/></svg>两点</button><button class="tool"><svg class="ic"><use href="#i-par"/></svg>平行</button><button class="more" aria-label="更多"><svg><use href="#i-more"/></svg></button></div>
<div class="band fill"><span class="grip"></span><div class="combo w-floor"><select aria-label="偏移方式"><option>不偏移</option></select></div><span class="vsep ms-1"></span><label class="dim" for="ox">X=</label><div class="spin"><input id="ox" type="text" value="0"><svg viewBox="0 0 9 17"><path d="M2 4l2.500-3L7 4zM2 13l2.500 3L7 13z" fill="#555"/></svg></div><span class="dim">mm</span><label class="dim ms-1" for="oy">Y=</label><div class="spin"><input id="oy" type="text" value="0"><svg viewBox="0 0 9 17"><path d="M2 4l2.500-3L7 4zM2 13l2.500 3L7 13z" fill="#555"/></svg></div><span class="dim">mm</span><span class="vsep ms-1"></span><input class="chk" type="checkbox" id="rot"><label for="rot">旋转</label><button class="more me-1" aria-label="更多"><svg><use href="#i-more"/></svg></button></div>
</div>
<div class="rowbar d-flex flex-shrink-0"><div class="band b-stub"><span class="grip"></span></div></div>
<div class="rowbar gap-row d-flex flex-shrink-0"><div class="band fill">
<span class="grip"></span><button class="tool dd"><svg class="ic"><use href="#i-cur"/></svg>选择</button><span class="vsep"></span><button class="tool"><svg class="ic"><use href="#i-line"/></svg>直线</button><button class="tool"><svg class="ic"><use href="#i-ptlen"/></svg>点加长度</button><button class="tool dd"><svg class="ic"><use href="#i-arc"/></svg>三点画弧</button><div class="combo w-blank me-1"><select aria-label="画弧参数"><option></option></select></div><button class="tool"><svg class="ic"><use href="#i-rect"/></svg>矩形</button><span class="vsep"></span><button class="tool ddt"><svg class="ic"><use href="#i-smart"/></svg>智能布置</button><span class="vsep"></span><button class="tool"><svg class="ic"><use href="#i-seg"/></svg>修改梁段属性</button><button class="tool dd"><svg class="ic"><use href="#i-orig"/></svg>原位标注</button><button class="tool dd"><svg class="ic"><use href="#i-span"/></svg>重提梁跨</button><button class="tool dd"><svg class="ic"><use href="#i-brush"/></svg>梁跨数据复制</button><button class="tool"><svg class="ic"><use href="#i-recog"/></svg>批量识别梁支座</button><button class="tool"><svg class="ic"><use href="#i-same"/></svg>应用到同名梁</button><button class="more me-1" aria-label="更多"><svg><use href="#i-more"/></svg></button>
</div></div>

<div class="canvas flex-fill">
<svg viewBox="243 194 1123 483" preserveAspectRatio="xMinYMin slice" role="img" aria-label="三维视图">
<g stroke="#f00" fill="none" shape-rendering="crispEdges"><path d="M971 194L1366 226M549 247L1366 313M243 310L1335 398M243 485L1066 550M277 574L932 627M280 662L461 677"/><path d="M243 405L419 304M277 601L987 194M402 677L1243 194M517 677L1361 194M843 677L1366 377"/></g>
<g shape-rendering="crispEdges">
<path d="M243 266L438 282L442 304L243 290z" fill="#090"/><path d="M438 282L467 284L626 194H641L450 303L440 305z" fill="#00b300"/><path d="M442 283h8v20h-8z" fill="#090"/>
<path d="M243 194H605L467 274L243 256z" fill="#adadad"/><path d="M243 256L467 274V285L243 267z" fill="#737373"/><path d="M467 274L605 194H626L467 285z" fill="#868686"/>
<path d="M243 236L437 251V259L243 243z" fill="#090"/><path d="M437 251L544 194H559L449 257L437 259z" fill="#00b300"/><path d="M441 249h8v8h-8z" fill="#090"/><path d="M243 230L435 246L526 194H544L446 249L440 250L437 251L243 236z" fill="#00e600"/>
</g>
<g fill="none" stroke="#007800" shape-rendering="crispEdges"><circle cx="256" cy="311" r="13"/><circle cx="256" cy="398" r="13"/><circle cx="256" cy="485" r="13"/><circle cx="425" cy="664" r="13"/><circle cx="540" cy="664" r="13"/><circle cx="866" cy="664" r="13"/><circle cx="1132" cy="207" r="13"/></g>
<g fill="#d0d0d0" font-family="Liberation Mono" font-weight="700" font-size="14" text-anchor="middle"><text x="256" y="316">5</text><text x="256" y="403">D</text><text x="256" y="490">4</text><text x="425" y="669">B</text><text x="540" y="669">A</text><text x="866" y="669">A1</text><text x="1132" y="212">7</text></g>
<g shape-rendering="crispEdges">
<path d="M243 493L267 495L273 498L243 514z" fill="#adadad"/><path d="M243 498L252 499L243 503z" fill="#777"/><path d="M243 514L273 498L281 677H243z" fill="#868686"/>
<path d="M639 357L652 349L664 600L648 610z" fill="#00b3b3"/><path d="M612 356L639 357L648 610L623 608z" fill="#099"/><path d="M612 356L628 346L652 348L639 357z" fill="#00e6e6"/>
<path d="M639 357L652 348L913 370L898 379z" fill="#00e600"/><path d="M639 357L898 379L902 428L641 407z" fill="#090"/>
<path d="M644 475L659 466L906 487L903 495z" fill="#00e600"/><path d="M644 475L903 495L906 545L646 524z" fill="#090"/>
<path d="M898 380L924 382L935 633L909 631z" fill="#099"/><path d="M924 382L940 372L950 624L935 633z" fill="#00b3b3"/><path d="M898 380L913 369L940 372L924 382z" fill="#00e6e6"/>
</g>
<g fill="none" stroke="#fff" stroke-opacity=".5"><circle cx="804" cy="435" r="214.500"/><circle cx="804" cy="221" r="13.500"/><circle cx="1018" cy="435" r="13.500"/><circle cx="804" cy="650" r="13.500"/><circle cx="589" cy="435" r="13.500"/></g>
<path d="M297 627L265 624" stroke="#0f0" stroke-width="4"/><path d="M253 624l12-4v9z" fill="#0f0"/><path d="M262 616l9 8M272 616l-9 9" stroke="#0f0"/>
<path d="M298 627L313 618" stroke="#f00" stroke-width="4"/><path d="M312 617l7-3-1 5M299 613l7 7M306 613l-6 6" fill="none" stroke="#f00"/>
<path d="M297 628L296 590" stroke="#007fff" stroke-width="4"/><path d="M296 580l5 12h-10z" fill="#007fff"/><path d="M288 577h8l-8 9h7" fill="none" stroke="#007fff"/>
</svg>
</div>
<div class="rowbar snapbar d-flex align-items-center flex-shrink-0">
<div class="band"><span class="grip"></span><button class="tool"><svg class="ic"><use href="#i-ortho"/></svg>正交</button><button class="tool on"><svg class="ic"><use href="#i-snap"/></svg>对象捕捉</button><button class="tool on"><svg class="ic"><use href="#i-dyn"/></svg>动态输入</button></div>
<div class="band ms-1"><span class="grip"></span><button class="tool"><svg class="ic"><use href="#i-x"/></svg>交点</button><button class="tool on"><svg class="ic"><use href="#i-perp"/></svg>垂点</button><button class="tool on"><svg class="ic"><use href="#i-mid"/></svg>中点</button><button class="tool"><svg class="ic"><use href="#i-vert"/></svg>顶点</button><button class="tool"><svg class="ic"><use href="#i-coord"/></svg>坐标</button></div>
</div>
</main>
</div>

<footer class="status d-flex">
<div class="s-xy">X=50197 Y=5132</div><div class="s-h"><span class="zh">层高</span>:2.8m</div><div class="s-b"><span class="zh">底标高</span>:13.07m</div><div class="s-n">0</div><div class="flex-fill"></div><div class="s-fps">774.9 FPS</div>
</footer>

<div class="taskbar d-flex align-items-center">
<button class="start" aria-label="开始"><svg width="16" height="16"><path d="M0 2.500 7 1.500v6H0zM8 1.300 16 0v7.500H8zM0 8.500h7v6L0 13.500zM8 8.500h8V16L8 14.700z" fill="#fff"/></svg></button>
<div class="search d-flex align-items-center"><svg width="23" height="23"><circle cx="11.500" cy="11.500" r="9" fill="none" stroke="#fff" stroke-width="3"/></svg><input type="text" placeholder="在这里输入你要搜索的内容" aria-label="搜索"><svg width="12" height="18"><rect x="3.500" y="1" width="5" height="10" rx="2" fill="none" stroke="#aaa"/><path d="M1 8v5h10V8M6 13v4M3 16.500h6" fill="none" stroke="#aaa"/></svg></div>
<button class="tk" aria-label="任务一"><svg viewBox="0 0 26 26"><g fill="#eee"><path d="M13 12C6 14 2 11 2 7s3-5 6-5 7 3 5 10z"/><path d="M14 13C12 6 15 2 19 2s5 3 5 6-3 7-10 5z"/><path d="M13 14c7-2 11 1 11 5s-3 5-6 5-7-3-5-10z"/><path d="M12 13c2 7-1 11-5 11s-5-3-5-6 3-7 10-5z"/></g><path d="M13 13C8 9 9 5 13 3M13 13c4-5 8-4 10 0M13 13c5 4 4 8 0 10M13 13c-4 5-8 4-10 0" fill="none" stroke="#000c10"/></svg></button>
<button class="tk" aria-label="任务二"><svg viewBox="0 0 26 26"><path d="M24 6C14 1 4 5 4 14c0 11 14 12 18 4 2-7-5-9-9-6-3 3 0 7 5 5M20 8C13 5 8 9 8 14c0 6 6 8 11 5" fill="none" stroke="#ddd" stroke-width="1.300"/></svg></button>
<button class="tk ms-1" aria-label="Edge"><svg viewBox="0 0 26 26"><path d="M3 12C4 5 8 2 13 2c7 0 10 5 10 12H9c0 6 7 7 12 4v4C13 26 4 24 5 15c1-4 4-6 7-7-5 0-7 2-9 4zm7-2h7c0-5-6-5-7 0z" fill="#0a7ad8"/></svg></button>
<button class="tk" aria-label="商店"><svg viewBox="0 0 26 26"><path d="M3 8h20v15L3 21z" fill="#fff"/><path d="M8 8c0-7 8-7 8 0M11 8c0-6 8-6 8 0" fill="none" stroke="#fff" stroke-width="1.500"/><path d="M8 11h4v4H8zM13 11h5v4h-5zM8 16h4v4H8zM13 16h5v4h-5z" fill="#111"/></svg></button>
<button class="tk" aria-label="资源管理器"><svg viewBox="0 0 26 26"><path d="M2 4h8l2 2h12v16H2z" fill="#ffd978"/><path d="M2 8h22v3H2z" fill="#fff0b8"/><path d="M6 23V14h14v9h-4v-4h-6v4z" fill="#37a6de"/></svg></button>
<button class="tk run" aria-label="广联达"><svg viewBox="0 0 26 26"><path d="M25 2c-2 4-5 4-8 4-6 0-9 4-8 8 1 5 8 5 9 0-1 0-3 0-4-2 2-4 9-2 9 3 0 12-22 12-22-3C1 2 14-3 25 2z" fill="#1aa0f2"/></svg></button>
<button class="tk run" aria-label="浏览器"><svg viewBox="0 0 26 26"><circle cx="13" cy="13" r="11" fill="#5fc12c"/><path d="M7 14h13c0-10-13-10-13 0 0 8 9 8 12 4" fill="none" stroke="#fff" stroke-width="3"/><path d="M3 23C6 14 16 5 25 1" fill="none" stroke="#9ae05b" stroke-width="2"/></svg></button>
<button class="tk cur" aria-label="GGJ2013"><svg><use href="#i-app"/></svg></button>
<div class="ms-auto d-flex align-items-center h-100 tray">
<div class="text-center me-3">53%<br>CPU使用</div>
<svg class="ms-1" width="12" height="8"><path d="M1 7l5-5 5 5" fill="none" stroke="#fff"/></svg>
<svg class="ms-2" width="18" height="14" viewBox="0 0 18 14"><path d="M5.500 4.500h10v7h-10zM16 6.500h1v3" fill="none" stroke="#fff"/><path d="M7 6h7v4H7zM0 3h6v3H0zM1 0v3M5 0v3M3 6v5" fill="#fff" stroke="#fff" stroke-width=".8"/></svg>
<svg class="ms-2" width="16" height="16" viewBox="0 0 16 16"><path d="M1 14C1 6 6 1 14 1M5 14c0-6 4-9 9-9M8 14c0-3 3-5 6-5" fill="none" stroke="#bbb"/><circle cx="12" cy="13" r="2" fill="#fff"/></svg>
<span class="tray-ime ms-4 ps-2">中</span>
<svg class="ms-3" width="16" height="16" viewBox="0 0 28 28"><path d="M5 2 24 0q3 0 3.500 3L28 20q0 3-3 4L6 27q-3 0-4-3L0 7q0-4 5-5z" fill="#f1441b"/><path d="M21 7C12 4 7 7 8 10s12 2 12 7-9 5-13 1" fill="none" stroke="#fff" stroke-width="4"/></svg>
<div class="text-center ms-3 ps-1">12:30<br>2017/7/7</div>
<svg class="ms-4 me-3" width="18" height="18"><path d="M1 1.500h16v12h-5l-3 3v-3H1z" fill="none" stroke="#fff"/></svg>
<span class="border-start border-secondary h-100 pe-1"></span>
</div>
</div>
</div>
<script src="https://cdn.jsdelivr.net/npm/bootstrap@5.3.0/dist/js/bootstrap.bundle.min.js"></script>
</body>
</html>
